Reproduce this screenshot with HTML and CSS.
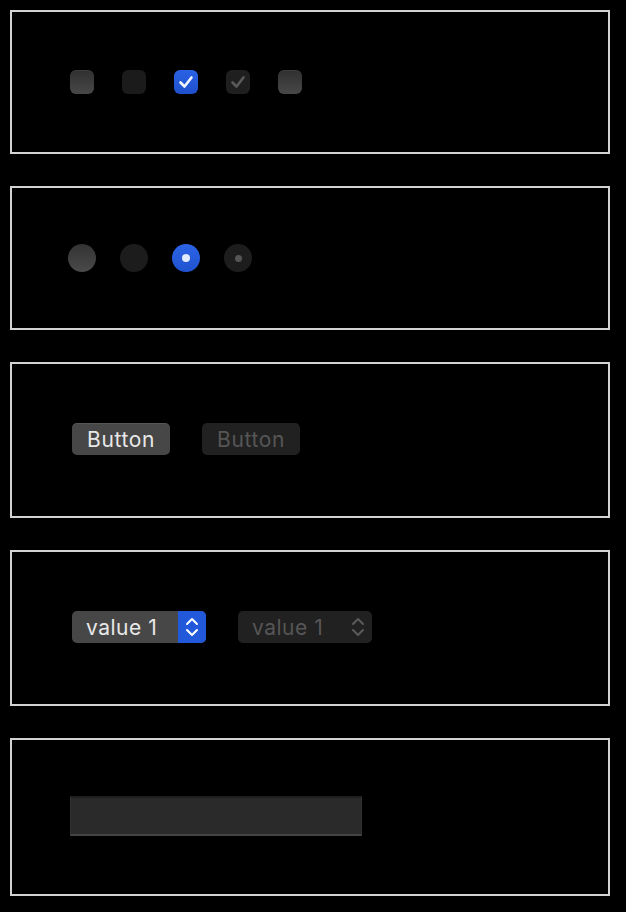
FILE: index.html
```html
<!DOCTYPE html>
<html>
<head>
<meta charset="utf-8">
<link rel="stylesheet" href="styles.css">
</head>
<body>
<main class="page">
  <section class="panel panel-checks">
    <span class="check check-off"></span>
    <span class="check check-off-dis"></span>
    <span class="check check-on"><svg viewBox="0 0 24 24" width="24" height="24"><path d="M6.5 12.5 L10.5 16.5 L17.5 7.5" fill="none" stroke="#f2f5ff" stroke-width="2.6" stroke-linecap="round" stroke-linejoin="round"/></svg></span>
    <span class="check check-on-dis"><svg viewBox="0 0 24 24" width="24" height="24"><path d="M6.5 12.5 L10.5 16.5 L17.5 7.5" fill="none" stroke="#5a5a5a" stroke-width="2.6" stroke-linecap="round" stroke-linejoin="round"/></svg></span>
    <span class="check check-off"></span>
  </section>
  <section class="panel panel-radios">
    <span class="radio radio-off"></span>
    <span class="radio radio-off-dis"></span>
    <span class="radio radio-on"><span class="dot"></span></span>
    <span class="radio radio-on-dis"><span class="dot"></span></span>
  </section>
  <section class="panel panel-buttons">
    <button class="btn">Button</button>
    <button class="btn btn-dis">Button</button>
  </section>
  <section class="panel panel-selects">
    <div class="select">
      <span class="select-label">value 1</span>
      <span class="select-arrows"><svg viewBox="0 0 28 32" width="28" height="32"><path d="M9 13 L14 8 L19 13 M9 19 L14 24 L19 19" fill="none" stroke="#ffffff" stroke-width="2" stroke-linecap="round" stroke-linejoin="round"/></svg></span>
    </div>
    <div class="select select-dis">
      <span class="select-label">value 1</span>
      <span class="select-arrows"><svg viewBox="0 0 28 32" width="28" height="32"><path d="M9 13 L14 8 L19 13 M9 19 L14 24 L19 19" fill="none" stroke="#5a5a5a" stroke-width="2" stroke-linecap="round" stroke-linejoin="round"/></svg></span>
    </div>
  </section>
  <section class="panel panel-field">
    <div class="field"></div>
  </section>
</main>
</body>
</html>
```
FILE: styles.css
```css
html, body {
  margin: 0;
  padding: 0;
  background: #000;
}
body {
  font-family: Inter, "Noto Sans", sans-serif;
}
.page {
  padding: 10px 16px 10px 10px;
  display: flex;
  flex-direction: column;
  gap: 32px;
}
.panel {
  box-sizing: border-box;
  width: 600px;
  border: 2px solid #d2d2d2;
  display: flex;
  align-items: center;
}
.panel-checks { height: 144px; padding-left: 58px; gap: 28px; }
.panel-radios { height: 144px; padding-left: 56px; gap: 24px; }
.panel-buttons { height: 156px; padding-left: 60px; gap: 32px; padding-bottom: 2px; }
.panel-selects { height: 156px; padding-left: 60px; gap: 32px; padding-bottom: 2px; }
.panel-field { height: 158px; padding-left: 58px; padding-bottom: 2px; }

.check {
  width: 24px;
  height: 24px;
  border-radius: 6px;
  display: block;
  box-sizing: border-box;
}
.check svg { display: block; }
.check-off {
  background: linear-gradient(#303030, #484848);
  box-shadow: inset 0 1px 0 rgba(255,255,255,0.06);
}
.check-off-dis { background: #1b1b1b; }
.check-on { background: linear-gradient(#2a62e4, #1f50cc); }
.check-on-dis { background: #1f1f1f; }

.radio {
  width: 28px;
  height: 28px;
  border-radius: 50%;
  display: flex;
  align-items: center;
  justify-content: center;
}
.radio-off { background: linear-gradient(#333333, #4a4a4a); }
.radio-off-dis { background: #1c1c1c; }
.radio-on { background: linear-gradient(#2c64e6, #1f52cf); }
.radio-on .dot { width: 8px; height: 8px; border-radius: 50%; background: #e2eaff; }
.radio-on-dis { background: #1d1d1d; }
.radio-on-dis .dot { width: 7px; height: 7px; border-radius: 50%; background: #555; }

.btn {
  width: 98px;
  height: 32px;
  border: 0;
  border-radius: 5px;
  background: #474747;
  color: #e8e8e8;
  font-family: Inter, "Noto Sans", sans-serif;
  font-size: 21px;
  letter-spacing: 0.6px;
  padding: 1px 0 0;
  box-shadow: inset 0 1px 0 rgba(255,255,255,0.08);
}
.btn-dis {
  background: #212121;
  color: #565656;
  box-shadow: none;
}

.select {
  width: 134px;
  height: 32px;
  border-radius: 5px;
  background: #474747;
  display: flex;
  overflow: hidden;
  color: #e8e8e8;
  font-size: 21px;
  letter-spacing: 0.5px;
}
.select-label {
  flex: 1;
  display: flex;
  align-items: center;
  padding: 1px 0 0 14px;
}
.select-arrows {
  width: 28px;
  background: #2259da;
  display: block;
}
.select-arrows svg { display: block; }
.select-dis {
  background: #212121;
  color: #565656;
}
.select-dis .select-arrows { background: transparent; }

.field {
  box-sizing: border-box;
  width: 292px;
  height: 40px;
  background: #2a2a2a;
  border-top: 2px solid #1e1e1e;
  border-bottom: 2px solid #444;
  border-left: 1px solid #303030;
  border-right: 1px solid #303030;
}
```
